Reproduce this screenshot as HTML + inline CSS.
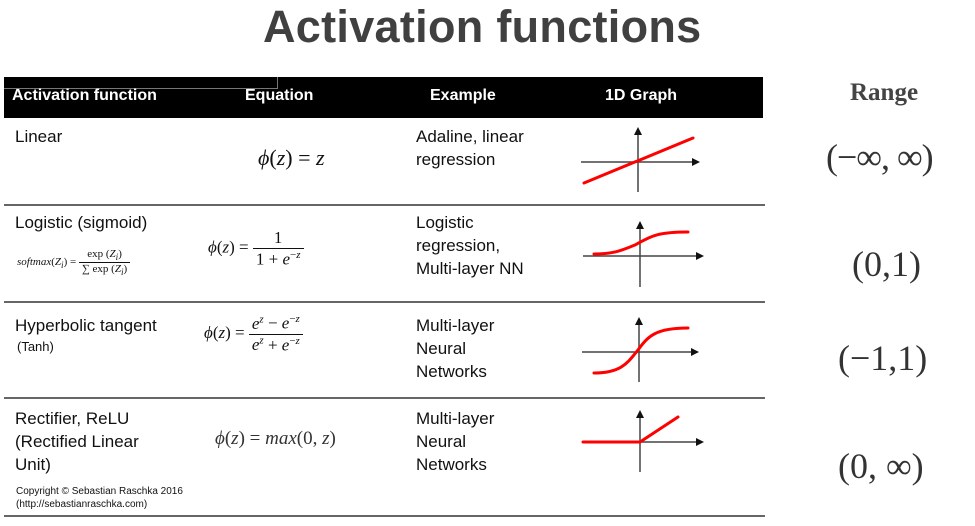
<!DOCTYPE html>
<html><head><meta charset="utf-8"><style>
body{margin:0;width:975px;height:526px;background:#fff;position:relative;overflow:hidden;font-family:"Liberation Sans",sans-serif;color:#111}
.a{position:absolute;white-space:nowrap}
.t{font-size:17px;line-height:23px}
.m{font-family:"Liberation Serif",serif;font-size:18px}
.hr{position:absolute;left:4px;width:761px;height:2px;background:#666}
.h{color:#fff;font-weight:bold;font-size:16px;top:87px}
.r{font-family:"Liberation Serif",serif;color:#333;font-size:36px}
.fr{display:inline-block;vertical-align:middle;text-align:center}
.fr span{display:block;padding:0 3px}
.fr span:first-child{border-bottom:1px solid #111}
</style></head><body>
<div class="a" style="left:263px;top:1px;font-size:45px;font-weight:bold;color:#404040;letter-spacing:0.3px">Activation functions</div>
<div class="a" style="left:4px;top:77px;width:759px;height:41px;background:#000"></div>
<div class="a" style="left:4px;top:77px;width:273px;height:11px;border:1px solid #777;border-top:none;border-left:none"></div>
<div class="a h" style="left:12px">Activation function</div>
<div class="a h" style="left:245px">Equation</div>
<div class="a h" style="left:430px">Example</div>
<div class="a h" style="left:605px">1D Graph</div>
<div class="a" style="left:850px;top:79px;font-family:'Liberation Serif',serif;font-weight:bold;font-size:25px;color:#444">Range</div>

<div class="hr" style="top:204px"></div>
<div class="hr" style="top:301px"></div>
<div class="hr" style="top:397px"></div>
<div class="hr" style="top:515px"></div>

<div class="a t" style="left:15px;top:125px">Linear</div>
<div class="a m" style="left:258px;top:145px;font-size:22px"><i>ϕ</i>(<i>z</i>) = <i>z</i></div>
<div class="a t" style="left:416px;top:125px">Adaline, linear<br>regression</div>

<div class="a t" style="left:15px;top:211px">Logistic (sigmoid)</div>
<div class="a m" style="left:17px;top:248px;font-size:11px"><i>softmax</i>(<i>Z<sub>i</sub></i>) = <span class="fr"><span>exp (<i>Z<sub>i</sub></i>)</span><span>∑ exp (<i>Z<sub>i</sub></i>)</span></span></div>
<div class="a m" style="left:208px;top:228px;font-size:17px"><i>ϕ</i>(<i>z</i>) = <span class="fr"><span>1</span><span>1 + <i>e</i><sup style="font-size:11px">−<i>z</i></sup></span></span></div>
<div class="a t" style="left:416px;top:211px">Logistic<br>regression,<br>Multi-layer NN</div>

<div class="a t" style="left:15px;top:314px">Hyperbolic tangent</div>
<div class="a" style="left:17px;top:339px;font-size:13px">(Tanh)</div>
<div class="a m" style="left:204px;top:313px;font-size:17px"><i>ϕ</i>(<i>z</i>) = <span class="fr"><span><i>e<sup style="font-size:11px">z</sup></i> − <i>e</i><sup style="font-size:11px">−<i>z</i></sup></span><span><i>e<sup style="font-size:11px">z</sup></i> + <i>e</i><sup style="font-size:11px">−<i>z</i></sup></span></span></div>
<div class="a t" style="left:416px;top:314px">Multi-layer<br>Neural<br>Networks</div>

<div class="a t" style="left:15px;top:407px">Rectifier, ReLU<br>(Rectified Linear<br>Unit)</div>
<div class="a m" style="left:215px;top:428px;font-size:19px;color:#333"><i>ϕ</i>(<i>z</i>) = <i>max</i>(0, <i>z</i>)</div>
<div class="a t" style="left:416px;top:407px">Multi-layer<br>Neural<br>Networks</div>
<div class="a" style="left:16px;top:485px;font-size:10px;line-height:13px">Copyright © Sebastian Raschka 2016<br>(http://sebastianraschka.com)</div>

<div class="a r" style="left:826px;top:136px;letter-spacing:-1px">(−∞, ∞)</div>
<div class="a r" style="left:852px;top:243px">(0,1)</div>
<div class="a r" style="left:838px;top:337px">(−1,1)</div>
<div class="a r" style="left:838px;top:445px">(0, ∞)</div>

<svg class="a" style="left:0;top:0" width="975" height="526">
<defs><marker id="ar" markerWidth="8" markerHeight="8" refX="6" refY="4" orient="auto" markerUnits="userSpaceOnUse"><path d="M0,0 L8,4 L0,8 Z" fill="#111"/></marker></defs>
<g stroke="#444" stroke-width="1.5" fill="none">
<line x1="638" y1="192" x2="638" y2="129" marker-end="url(#ar)"/><line x1="581" y1="162" x2="698" y2="162" marker-end="url(#ar)"/>
<line x1="640" y1="287" x2="640" y2="223" marker-end="url(#ar)"/><line x1="583" y1="256" x2="702" y2="256" marker-end="url(#ar)"/>
<line x1="639" y1="382" x2="639" y2="319" marker-end="url(#ar)"/><line x1="582" y1="352" x2="697" y2="352" marker-end="url(#ar)"/>
<line x1="640" y1="472" x2="640" y2="412" marker-end="url(#ar)"/><line x1="583" y1="442" x2="702" y2="442" marker-end="url(#ar)"/>
</g>
<g stroke="#f00" stroke-width="3" fill="none" stroke-linecap="round">
<line x1="584" y1="183" x2="693" y2="138"/>
<path d="M594,254 C615,254 622,250 635,245 C650,237 655,232 688,232"/>
<path d="M594,373 C622,373 628,362 638,350 C648,336 656,328 688,328"/>
<path d="M583,442 L640,442 L678,417"/>
</g>
</svg>
</body></html>
